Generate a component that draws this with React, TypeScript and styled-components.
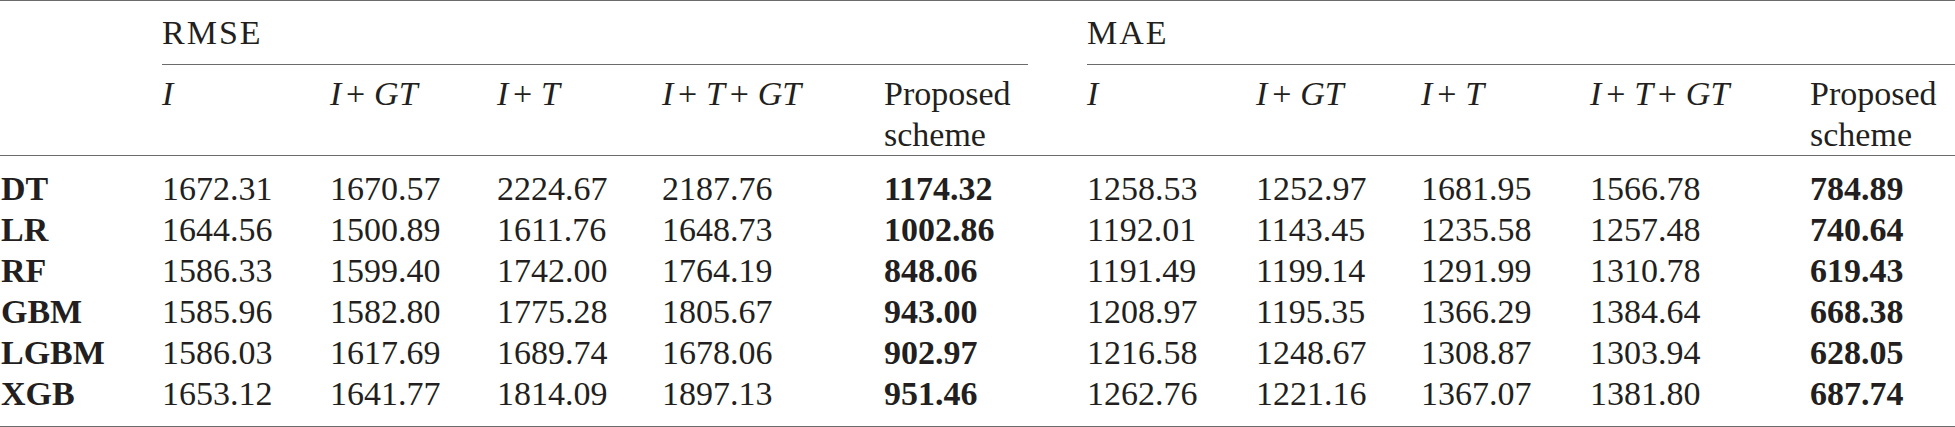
import React from "react";
import styled, { createGlobalStyle } from "styled-components";

const GlobalStyle = createGlobalStyle`
  html, body {
    margin: 0;
    padding: 0;
    background: #ffffff;
  }
  body {
    font-family: "Liberation Serif", "Times New Roman", serif;
    color: #231f20;
  }
`;

const RULE = "1px solid #6b6b6b";

const Table = styled.table`
  width: 1955px;
  table-layout: fixed;
  border-collapse: collapse;
  border-top: ${RULE};
  border-bottom: ${RULE};
  font-family: "Liberation Serif", "Times New Roman", serif;
  font-size: 34px;
  color: #231f20;
`;

const Col = styled.col<{ $w: number }>`
  width: ${(p) => p.$w}px;
`;

const GroupRow = styled.tr``;

const GroupHead = styled.th<{ $ruled?: boolean }>`
  text-align: left;
  font-weight: normal;
  letter-spacing: 2px;
  line-height: 38px;
  padding: 13px 0 12px 0;
  border-bottom: ${(p) => (p.$ruled ? RULE : "none")};
`;

const HeadRow = styled.tr`
  border-bottom: ${RULE};
`;

const ColHead = styled.th`
  text-align: left;
  vertical-align: top;
  font-weight: normal;
  line-height: 41px;
  padding: 8px 0 0 0;
`;

const Var = styled.span`
  font-style: italic;
`;

const Op = styled.span`
  padding: 0 0.26em 0 0.14em;
`;

const DataRow = styled.tr`
  &:first-child td {
    padding-top: 12px;
  }
  &:last-child td {
    padding-bottom: 12px;
  }
`;

const Cell = styled.td<{ $bold?: boolean }>`
  text-align: left;
  line-height: 41px;
  padding: 0;
  font-weight: ${(p) => (p.$bold ? "bold" : "normal")};
  white-space: nowrap;
`;

const Label = styled(Cell)`
  font-weight: bold;
  padding-left: 1px;
`;

const widths = [162, 168, 167, 165, 222, 144, 59, 169, 165, 169, 220, 145];

type Row = { name: string; rmse: string[]; mae: string[] };

const rows: Row[] = [
  { name: "DT", rmse: ["1672.31", "1670.57", "2224.67", "2187.76", "1174.32"], mae: ["1258.53", "1252.97", "1681.95", "1566.78", "784.89"] },
  { name: "LR", rmse: ["1644.56", "1500.89", "1611.76", "1648.73", "1002.86"], mae: ["1192.01", "1143.45", "1235.58", "1257.48", "740.64"] },
  { name: "RF", rmse: ["1586.33", "1599.40", "1742.00", "1764.19", "848.06"], mae: ["1191.49", "1199.14", "1291.99", "1310.78", "619.43"] },
  { name: "GBM", rmse: ["1585.96", "1582.80", "1775.28", "1805.67", "943.00"], mae: ["1208.97", "1195.35", "1366.29", "1384.64", "668.38"] },
  { name: "LGBM", rmse: ["1586.03", "1617.69", "1689.74", "1678.06", "902.97"], mae: ["1216.58", "1248.67", "1308.87", "1303.94", "628.05"] },
  { name: "XGB", rmse: ["1653.12", "1641.77", "1814.09", "1897.13", "951.46"], mae: ["1262.76", "1221.16", "1367.07", "1381.80", "687.74"] },
];

const Formula: React.FC<{ terms: string[] }> = ({ terms }) => (
  <>
    {terms.map((t, i) => (
      <React.Fragment key={i}>
        {i > 0 && <Op>+</Op>}
        <Var>{t}</Var>
      </React.Fragment>
    ))}
  </>
);

const formulas: string[][] = [["I"], ["I", "GT"], ["I", "T"], ["I", "T", "GT"]];

const HeaderGroup: React.FC = () => (
  <>
    {formulas.map((f, i) => (
      <ColHead key={i}>
        <Formula terms={f} />
      </ColHead>
    ))}
    <ColHead>
      Proposed
      <br />
      scheme
    </ColHead>
  </>
);

const Values: React.FC<{ values: string[] }> = ({ values }) => (
  <>
    {values.map((v, i) => (
      <Cell key={i} $bold={i === values.length - 1}>
        {v}
      </Cell>
    ))}
  </>
);

export default function App() {
  return (
    <>
      <GlobalStyle />
      <Table>
        <colgroup>
          {widths.map((w, i) => (
            <Col key={i} $w={w} />
          ))}
        </colgroup>
        <thead>
          <GroupRow>
            <GroupHead />
            <GroupHead colSpan={5} $ruled>
              RMSE
            </GroupHead>
            <GroupHead />
            <GroupHead colSpan={5} $ruled>
              MAE
            </GroupHead>
          </GroupRow>
          <HeadRow>
            <ColHead />
            <HeaderGroup />
            <ColHead />
            <HeaderGroup />
          </HeadRow>
        </thead>
        <tbody>
          {rows.map((r) => (
            <DataRow key={r.name}>
              <Label>{r.name}</Label>
              <Values values={r.rmse} />
              <Cell />
              <Values values={r.mae} />
            </DataRow>
          ))}
        </tbody>
      </Table>
    </>
  );
}
